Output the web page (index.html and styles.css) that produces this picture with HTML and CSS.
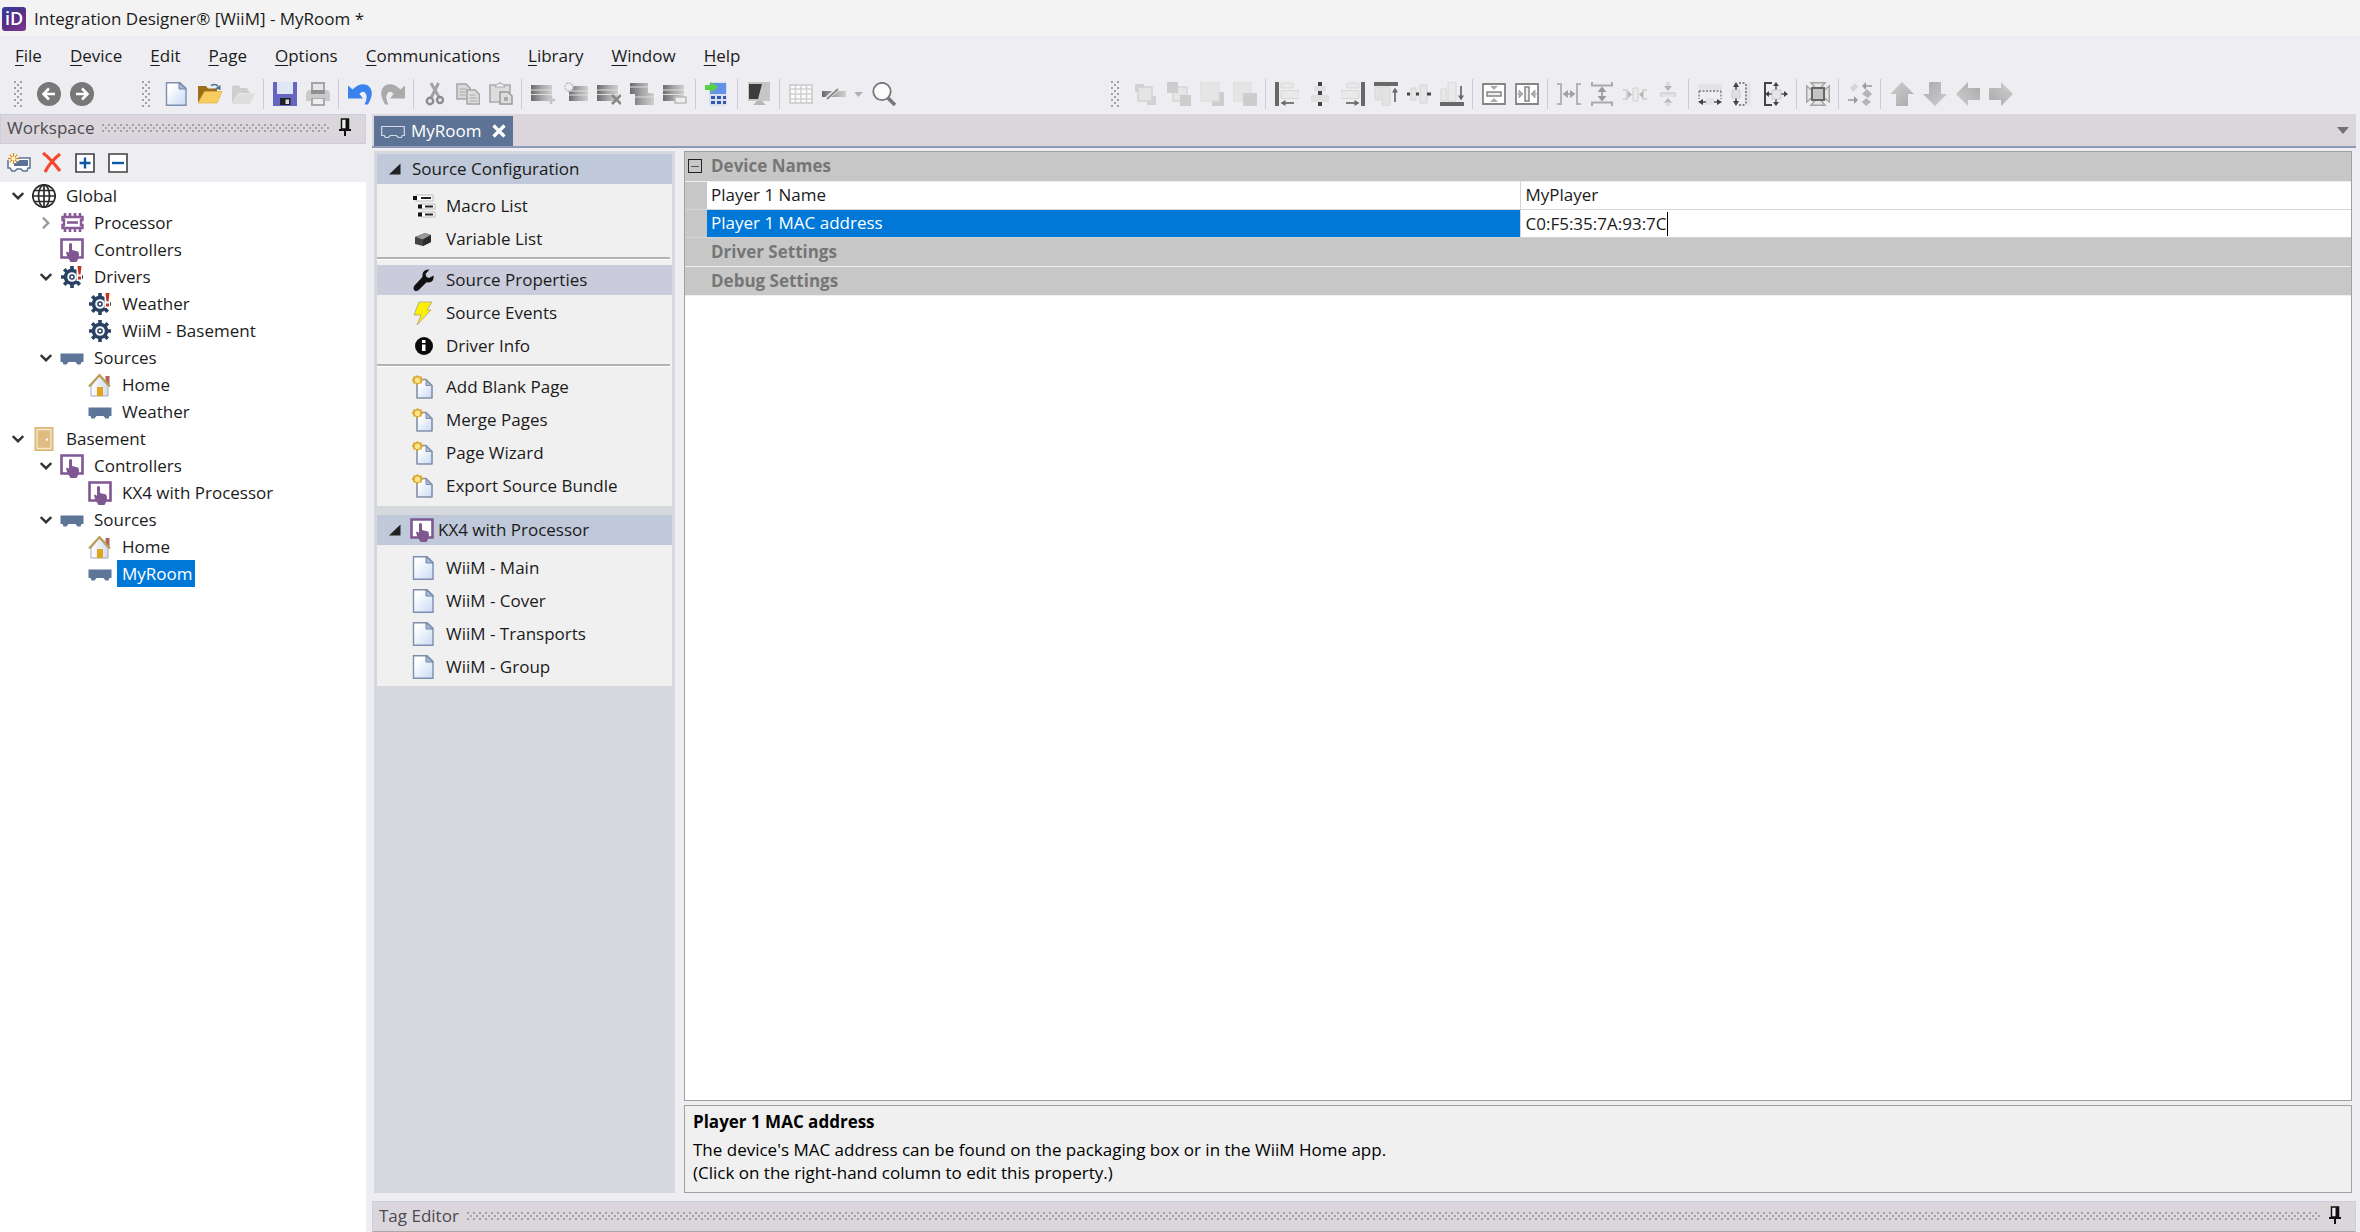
FILE: index.html
```html
<!DOCTYPE html>
<html lang="en">
<head>
<meta charset="utf-8">
<title>Integration Designer® [WiiM] - MyRoom *</title>
<link rel="stylesheet" href="styles.css">
</head>
<body>
<svg class="sprite" aria-hidden="true">
  <defs>
    <linearGradient id="g-page" x1="0" y1="0" x2="1" y2="1"><stop offset="0.2" stop-color="#fff"/><stop offset="1" stop-color="#c9d9f5"/></linearGradient>
    <linearGradient id="g-gray" x1="0" y1="0" x2="1" y2="1"><stop offset="0" stop-color="#cfcfcf"/><stop offset="1" stop-color="#a9a9a9"/></linearGradient>
    <linearGradient id="g-bar" x1="0" y1="0" x2="1" y2="0"><stop offset="0" stop-color="#6a6a6a"/><stop offset=".5" stop-color="#a6a6a6"/><stop offset="1" stop-color="#cfcfcf"/></linearGradient>
    <linearGradient id="g-wall" x1="0" y1="0" x2="1" y2="0"><stop offset="0" stop-color="#fff"/><stop offset="1" stop-color="#d5dceb"/></linearGradient>
  </defs>
  <symbol id="back" viewBox="0 0 24 24"><circle cx="12" cy="12" r="12" fill="#787878"/><path d="M18 12H7M12 6.500L6.500 12l5.500 5.500" fill="none" stroke="#fff" stroke-width="2.600"/></symbol>
  <symbol id="forward" viewBox="0 0 24 24"><circle cx="12" cy="12" r="12" fill="#787878"/><path d="M6 12h11M12 6.500l5.500 5.500-5.500 5.500" fill="none" stroke="#fff" stroke-width="2.600"/></symbol>
  <symbol id="page" viewBox="0 0 24 24"><path d="M1.500.7H15l6 5.500v17.100h-19.500z" fill="url(#g-page)" stroke="#7d8fae" stroke-width="1.400"/><path d="M14 1v6h7z" fill="#a9bad8" stroke="#6f84a8" stroke-width="1"/></symbol>
  <symbol id="newpage" viewBox="0 0 24 24"><path d="M5 4.500h9l6 6v12.500H5z" fill="url(#g-page)" stroke="#8290a8" stroke-width="1.600" stroke-linejoin="round"/><path d="M14 5v5.500h5.500z" fill="#a9b8d4" stroke="#8290a8"/><path d="M5.500 0l1.700 1.500L9.500 1.200l.4 2.300L11.500 5l-1.600 1.600-.4 2.200-2.300-.2-1.700 1.900-1.700-1.900-2.300.2-.4-2.200L-.5 5l1.600-1.500.4-2.300 2.300.3z" fill="#dca62c"/><circle cx="5.500" cy="5.200" r="2.800" fill="#fbe58c"/></symbol>
  <symbol id="open" viewBox="0 0 24 24"><path d="M0 21V4h8l2 2.500h9V10H7z" fill="#9c6e1b"/><path d="M6.500 9.500H24L19 21H0z" fill="#f9cc5f" stroke="#e2ae40" stroke-width=".7"/><path d="M13 3.500q4.500-2.500 7 .8" fill="none" stroke="#4b7191" stroke-width="1.500"/><path d="M22.500 3v5L17 6.500z" fill="#4b7191"/></symbol>
  <symbol id="closefolder" viewBox="0 0 24 24"><path d="M1 21V5q0-1.500 1.500-1.500h5L9.500 6H16l3 5H7z" fill="#cecece"/><path d="M7 11.500h17L19 22H1z" fill="#dedede"/></symbol>
  <symbol id="save" viewBox="0 0 24 24"><path d="M0 0h24v24H0z" fill="#6565c4"/><path d="M4 0h16v12H4z" fill="#dfe6f6"/><path d="M7 16h10.500v7H7z" fill="#222"/><path d="M12.500 17.500h3.500V22h-3.500z" fill="#ddd"/></symbol>
  <symbol id="print" viewBox="0 0 24 24"><path d="M5 0h14v8H5z" fill="#a5a5a5"/><path d="M7 2h10v6H7z" fill="#e6e6e6"/><path d="M2 8h20l2 3v8H0v-8z" fill="#cacaca"/><path d="M5 8h14v4H5z" fill="#909090"/><path d="M5 16h14v8H5z" fill="#a9a9a9"/><path d="M7 17h10v5H7z" fill="#eee"/></symbol>
  <symbol id="undo" viewBox="0 0 24 24"><path d="M0 3.500l4.500 4Q12 0 19 3q9 5.500 1 19.500h-3.500Q20.500 15 17 10.500q-3-2-5.500 1.500l3.500 4.500H0z" fill="#3a83ee"/></symbol>
  <symbol id="redo" viewBox="0 0 24 24"><path d="M24 3.500l-4.500 4Q12 0 5 3q-9 5.500-1 19.500h3.500Q3.500 15 7 10.500q3-2 5.500 1.500L9 16.500h15z" fill="#aaa"/></symbol>
  <symbol id="cut" viewBox="0 0 24 24"><path d="M8 1l8.500 15M15.500 1L8 16" stroke="#a2a2a2" stroke-width="3"/><circle cx="7" cy="19" r="3.200" fill="none" stroke="#8d8d8d" stroke-width="2.400"/><circle cx="17" cy="18" r="3" fill="none" stroke="#8d8d8d" stroke-width="2.400"/></symbol>
  <symbol id="copy" viewBox="0 0 24 24"><path d="M1 2h9l4 4v11H1z" fill="#dadada" stroke="#a5a5a5" stroke-width="1.500"/><path d="M3.500 7h7M3.500 10h7M3.500 13h6" stroke="#aaa" stroke-width="1.200"/><path d="M11 8h8l4.500 4.500V22H11z" fill="#ddd" stroke="#a5a5a5" stroke-width="1.500"/><path d="M13.500 13h6M13.500 16h8M13.500 19h8" stroke="#aaa" stroke-width="1.200"/></symbol>
  <symbol id="paste" viewBox="0 0 24 24"><path d="M1 3h20v17H1z" fill="#ddd" stroke="#aaa" stroke-width="1.600"/><path d="M6 5l2-3h2l1-2 1 2h2l2 3z" fill="#f5f5f5" stroke="#aaa"/><path d="M11 10h8l4 4v8H11z" fill="#ddd" stroke="#999" stroke-width="1.500"/><path d="M15 15h4v4h-4z" fill="#aaa"/></symbol>
  <symbol id="mac" viewBox="0 0 24 24"><path d="M0 3h21v16H0z" fill="url(#g-bar)"/><path d="M0 8h21M0 12.500h21" stroke="#dedede" stroke-width="1"/></symbol>
  <symbol id="macadd" viewBox="0 0 24 24"><use href="#mac"/><path d="M20 14v8M16 18h8" stroke="#c4c4c4" stroke-width="2.400"/></symbol>
  <symbol id="macnew" viewBox="0 0 24 24"><path d="M5 4h19v15H5z" fill="url(#g-bar)"/><path d="M5 9h19M5 13h19" stroke="#dedede" stroke-width="1"/><circle cx="5" cy="5" r="4" fill="#eee" stroke="#c4c4c4" stroke-width="1.800" stroke-dasharray="2 1"/></symbol>
  <symbol id="macdel" viewBox="0 0 24 24"><use href="#mac"/><path d="M15 13l9 9M24 13l-9 9" stroke="#888" stroke-width="2.600"/></symbol>
  <symbol id="macdup" viewBox="0 0 24 24"><path d="M0 1h18v11H0zM5 11h19v12H5z" fill="url(#g-bar)"/><path d="M0 5h18M5 15h19" stroke="#dedede" stroke-width="1"/></symbol>
  <symbol id="macedit" viewBox="0 0 24 24"><use href="#mac"/><path d="M12 15h11v6H12z" fill="#eee" stroke="#bbb" stroke-width="1.600"/></symbol>
  <symbol id="calc" viewBox="0 0 24 24"><path d="M4 0h18v24H4z" fill="#d8e0ee"/><path d="M5 1h16v11H5z" fill="#6592e8"/><path d="M6 14h4v3H6zM12 14h4v3h-4zM18 14h3v3h-3zM6 19h4v3H6zM12 19h4v3h-4zM18 19h3v3h-3z" fill="#3556b0"/><path d="M0 3h6V0l7 5-7 6V8H0z" fill="#58d147"/></symbol>
  <symbol id="screen" viewBox="0 0 24 24"><path d="M1 0h22v19H1z" fill="#c6c6c6"/><path d="M2 2h13l-4 15H2z" fill="#3c3c3c"/><path d="M10 19h5l4 4H6z" fill="#b5b5b5"/></symbol>
  <symbol id="grid" viewBox="0 0 24 24"><path d="M1 3h22v18H1z" fill="#fdfdfd" stroke="#d2d2d2" stroke-width="2"/><path d="M1 7h22M1 12h22M1 17h22M6.500 3v18M12 3v18M17.500 3v18" stroke="#d0d0d0" stroke-width="1.500"/></symbol>
  <symbol id="line" viewBox="0 0 24 24"><path d="M0 9h24v6H0z" fill="url(#g-bar)"/><path d="M5 16L16 7" stroke="#eee" stroke-width="4"/><path d="M5 17L16 7" stroke="#888" stroke-width="1.800"/></symbol>
  <symbol id="find" viewBox="0 0 24 24"><path d="M15 15l8 8" stroke="#777" stroke-width="3.600"/><circle cx="10" cy="9.500" r="8.700" fill="#fbfbfb" stroke="#777" stroke-width="1.800"/></symbol>
  <symbol id="z1" viewBox="0 0 24 24"><path d="M1 2h9v8H1zM13 14h9v9h-9z" fill="#d2d2d2"/><path d="M4 5h14v14H4z" fill="#e4e4e4" stroke="#d2d2d2" stroke-width="1.500"/></symbol>
  <symbol id="z2" viewBox="0 0 24 24"><path d="M6 5h14v14H6z" fill="#e6e6e6" stroke="#d6d6d6" stroke-width="1.300"/><path d="M0 0h11v11H0zM13 13h11v11H13z" fill="#cdcdcd"/></symbol>
  <symbol id="z3" viewBox="0 0 24 24"><path d="M12 10h12v14H12z" fill="#cdcdcd"/><path d="M0 0h19v19H0z" fill="#e5e5e5" stroke="#dcdcdc"/></symbol>
  <symbol id="z4" viewBox="0 0 24 24"><path d="M0 0h18v19H0z" fill="#e5e5e5" stroke="#dcdcdc"/><path d="M10 11h14v13H10z" fill="#cdcdcd"/></symbol>
  <symbol id="aleft" viewBox="0 0 24 24"><path d="M6 1h12v5H6zM6 8.500h18v8H6z" fill="#e9e9e9" stroke="#d9d9d9"/><path d="M0 0h4v24H0z" fill="#686868"/><path d="M9 21h10" stroke="#686868" stroke-width="1.700"/><path d="M5.500 21l5-3v6z" fill="#686868"/></symbol>
  <symbol id="acenter" viewBox="0 0 24 24"><path d="M6 4h12v5H6zM3 13h18v7H3z" fill="#e0e0e0"/><path d="M10 0h4v4h-4zM10 9h4v4h-4zM10 20h4v4h-4z" fill="#444"/></symbol>
  <symbol id="aright" viewBox="0 0 24 24"><path d="M6 1h12v5H6zM0 8.500h18v8H0z" fill="#e9e9e9" stroke="#d9d9d9"/><path d="M20 0h4v24h-4z" fill="#686868"/><path d="M5 21h10" stroke="#686868" stroke-width="1.700"/><path d="M18.500 21l-5-3v6z" fill="#686868"/></symbol>
  <symbol id="atop" viewBox="0 0 24 24"><path d="M1 5h5v13H1zM8 5h8v19H8z" fill="#e3e3e3" stroke="#d6d6d6"/><path d="M0 0h24v4H0z" fill="#686868"/><path d="M21 9v11" stroke="#686868" stroke-width="1.700"/><path d="M21 5.500l3 5h-6z" fill="#686868"/></symbol>
  <symbol id="amiddle" viewBox="0 0 24 24"><path d="M4 6h5v12H4zM13 3h7v18h-7z" fill="#e6e6e6" stroke="#d4d4d4"/><path d="M0 10.500h3v3H0zM9 10.500h3v3H9zM20 10.500h4v3h-4z" fill="#444"/></symbol>
  <symbol id="abottom" viewBox="0 0 24 24"><path d="M1 7h5v12H1zM8 0h8v19H8z" fill="#e9e9e9" stroke="#d6d6d6"/><path d="M0 20h24v4H0z" fill="#686868"/><path d="M21 4v11" stroke="#686868" stroke-width="1.700"/><path d="M21 18.500l3-5h-6z" fill="#686868"/></symbol>
  <symbol id="cv" viewBox="0 0 24 24"><path d="M1 2h22v20H1z" fill="#fff" stroke="#858585" stroke-width="1.800"/><path d="M5 10h14v4H5z" fill="#eee" stroke="#858585" stroke-width="1.500"/><path d="M8 4h8l-4 4zM8 20h8l-4-4z" fill="#aaa"/></symbol>
  <symbol id="ch" viewBox="0 0 24 24"><path d="M1 2h22v20H1z" fill="#fff" stroke="#858585" stroke-width="1.800"/><path d="M10 5h4v14h-4z" fill="#eee" stroke="#858585" stroke-width="1.500"/><path d="M4 8v8l4-4zM20 8v8l-4-4zM1 12h4M19 12h4" fill="#aaa" stroke="#aaa"/></symbol>
  <symbol id="sw" viewBox="0 0 24 24"><path d="M0 2h4v20H0M24 2h-4v20h4M7 12h10" fill="none" stroke="#b4b4b4" stroke-width="2"/><path d="M5.500 12l5.500-4v8zM18.500 12L13 8v8z" fill="#a2a2a2"/></symbol>
  <symbol id="sh" viewBox="0 0 24 24"><path d="M2 0v3.500h20V0M2 24v-3.500h20V24M12 7v10" fill="none" stroke="#aaa" stroke-width="2"/><path d="M12 4.500l4.500 5.500h-9zM12 19.500l4.500-5.500h-9z" fill="#999"/></symbol>
  <symbol id="jw" viewBox="0 0 24 24"><path d="M0 8h4v9H0M24 8h-4v9h4" fill="none" stroke="#cbcbcb" stroke-width="1.500"/><path d="M10 6h5v13h-5z" fill="#ececec" stroke="#cfcfcf"/><path d="M5 9v7l4-3.500zM20 9v7l-4-3.500z" fill="#b4b4b4"/></symbol>
  <symbol id="jh" viewBox="0 0 24 24"><path d="M5 15v-4h14v4" fill="#e4e4e4" stroke="#cfcfcf" stroke-width="1.500"/><path d="M8 4h8l-4 5zM8 21h8l-4-5z" fill="#b4b4b4"/><path d="M10 0h4v4h-4zM10 20h4v4h-4z" fill="#dcdcdc"/></symbol>
  <symbol id="mw" viewBox="0 0 24 24"><path d="M0 2h24v6H0z" fill="#e3e3e3"/><path d="M1 9v8M23 9v8M1 9h22" fill="none" stroke="#777" stroke-width="1.300" stroke-dasharray="2 1.500"/><path d="M2 20h20" stroke="#555" stroke-width="1.500"/><path d="M0 20l5-3v6zM24 20l-5-3v6z" fill="#444"/><path d="M8 16h8v7H8z" fill="#e3e3e3"/></symbol>
  <symbol id="mh" viewBox="0 0 24 24"><path d="M14 1h6v22h-6z" fill="#e6e6e6"/><path d="M8 1h7M8 23h7M15 2v20" stroke="#666" stroke-width="1.400" stroke-dasharray="2 1.500"/><path d="M5 2v20" stroke="#444" stroke-width="1.500"/><path d="M5 0l3 5H2zM5 24l3-5H2z" fill="#444"/><path d="M1 8h8v8H1z" fill="#e0e0e0" stroke="#ccc"/></symbol>
  <symbol id="mb" viewBox="0 0 24 24"><path d="M8 1H1v22h7" fill="none" stroke="#444" stroke-width="2"/><path d="M12 2v20M3 12h20" stroke="#555" stroke-width="1.500"/><path d="M12 0l3 4H9zM12 24l3-4H9zM24 12l-4-3v6zM1 12l4-3v6z" fill="#444"/><path d="M8 8h9v9H8z" fill="#e6e6e6" stroke="#ccc"/></symbol>
  <symbol id="fit" viewBox="0 0 24 24"><path d="M5 .7h14l-5 6h-4zM5 23.300h14l-5-6h-4zM.7 4v16l6-5V9zM23.300 4v16l-6-5V9z" fill="#e4e4e4" stroke="#a4a4a4" stroke-width="1.500"/><path d="M6 6h12v12H6z" fill="#c4c4c4" stroke="#666" stroke-width="2"/></symbol>
  <symbol id="swap" viewBox="0 0 24 24"><path d="M2 6l5-5 3 4-5 5z" fill="#d6d6d6"/><path d="M14 12l5-5 5 5-4 4zM14 20l4-4 5 4-5 4z" fill="#b4b4b4"/><path d="M24 4h-8M0 18h8" stroke="#999" stroke-width="1.500"/><path d="M14 4l4-4v8zM10 18l-4-4v8z" fill="#999"/></symbol>
  <symbol id="arr" viewBox="0 0 24 24"><path d="M12 0l12 12h-6v12H6V12H0z" fill="url(#g-gray)"/></symbol>
  <symbol id="pin" viewBox="0 0 14 20"><path d="M3.500 1h7v10h-7z" fill="#eee" stroke="#111" stroke-width="1.500"/><path d="M7.500 1h3v10h-3z" fill="#111"/><path d="M1 12h12M7 12v6" stroke="#111" stroke-width="2"/></symbol>
  <symbol id="tri" viewBox="0 0 12 7"><path d="M0 0h12L6 7z"/></symbol>
  <symbol id="addsrc" viewBox="0 0 24 24"><path d="M1 9v8h2l2 3h3l2-2h4l2 2h4l1-3h2V7H11" fill="#fff" stroke="#5d7395" stroke-width="1.500"/><path d="M13 9h8v6H7v-3z" fill="#5d7395"/><circle cx="6.500" cy="7.500" r="5" fill="#fff"/><path d="M6.500 2v11M1 7.500h11M2.600 3.600l7.800 7.800M10.400 3.600l-7.800 7.800" stroke="#d08a22" stroke-width="1.300"/><circle cx="6.500" cy="7.500" r="2" fill="#fff3c0"/></symbol>
  <symbol id="del" viewBox="0 0 24 24"><path d="M3 2q7 5 17 18M20 3Q10 11 5 21" fill="none" stroke="#f5482f" stroke-width="3.200"/></symbol>
  <symbol id="plus" viewBox="0 0 24 24"><path d="M3 3h18v18H3z" fill="#fff" stroke="#404040" stroke-width="1.600"/><path d="M12 6.500v11M6.500 12h11" stroke="#0b59a4" stroke-width="2.400"/></symbol>
  <symbol id="minus" viewBox="0 0 24 24"><path d="M3 3h18v18H3z" fill="#fff" stroke="#404040" stroke-width="1.600"/><path d="M6 12h12" stroke="#0b59a4" stroke-width="2.400"/></symbol>
  <symbol id="globe" viewBox="0 0 24 24"><g fill="none" stroke="#2b2b2b" stroke-width="1.700"><circle cx="12" cy="12" r="11.200"/><ellipse cx="12" cy="12" rx="5.500" ry="11.200"/><path d="M12 1v22M1 12h22M3 6.500h18M3 17.500h18"/></g></symbol>
  <symbol id="cpu" viewBox="0 0 24 24"><path d="M5 2v4M10 2v4M15 2v4M20 2v4M5 17v4M10 17v4M15 17v4M20 17v4" stroke="#875a96" stroke-width="2.600"/><path d="M2.500 6h20v3H21v5h1.500v3h-20v-3H4V9H2.500z" fill="#fff" stroke="#875a96" stroke-width="2.400"/><path d="M7 11.500h11" stroke="#875a96" stroke-width="2.600"/></symbol>
  <symbol id="touch" viewBox="0 0 24 24"><path d="M1.500 1.500h21v18h-21z" fill="#fff" stroke="#7f5791" stroke-width="2.600"/><path d="M9 6q1.500-2 3 0v6l6 1.500q1 1 1 3.500-.5 4-2.500 7h-6L7 18l-1-4q1.500-1 3 1z" fill="#7f5791"/></symbol>
  <symbol id="gear" viewBox="0 0 24 24"><path d="M12 1v22M1 12h22M4.200 4.200l15.600 15.600M19.800 4.200L4.200 19.800" stroke="#2a4163" stroke-width="3.600"/><circle cx="12" cy="12" r="8.300" fill="#2a4163"/><circle cx="12" cy="12" r="4.800" fill="#f3f6fa"/><circle cx="12" cy="12" r="2.800" fill="#2a4163"/><circle cx="12" cy="12" r="1.300" fill="#fff"/></symbol>
  <symbol id="gearwarn" viewBox="0 0 24 24"><use href="#gear"/><path d="M16.500 0H22v16h-5.500z" fill="#fff"/><path d="M17.500 1h4l-1 8.500h-2zM18 11.500h3v3h-3z" fill="#c5341c"/></symbol>
  <symbol id="source" viewBox="0 0 24 24"><path d="M.5 7.500h23v8.500h-2l-1 2.500h-3l-2-2.500h-7l-2 2.500h-3l-1-2.500h-2z" fill="#5d7597"/></symbol>
  <symbol id="sourceline" viewBox="0 0 24 24"><path d="M.7 7.500h22.600v9h-2l-1 2h-3l-2-2h-6l-2 2h-3l-1-2H.7z" fill="none" stroke="#d2dae6" stroke-width="1.200"/></symbol>
  <symbol id="home" viewBox="0 0 24 24"><path d="M17.500 3h4v9h-4z" fill="#b5615c"/><path d="M3 13l8-10 9 10v10H3z" fill="url(#g-wall)" stroke="#9da9bd"/><path d="M1 13.500L11.500 2 22 13.500" fill="none" stroke="#b99f4e" stroke-width="2"/><path d="M9 14h6v9H9z" fill="#e0a51c"/></symbol>
  <symbol id="door" viewBox="0 0 24 24"><path d="M2.500 0h19v24h-19z" fill="#dcb775"/><path d="M5 2.500h14v19H5z" fill="#dfbc80" stroke="#f7ead0" stroke-width="1.300"/><circle cx="15" cy="12.500" r="1.200" fill="#fff"/></symbol>
  <symbol id="chev" viewBox="0 0 12 12"><path d="M.7 3l5.300 5.200L11.300 3" fill="none" stroke-width="2.400"/></symbol>
  <symbol id="fold" viewBox="0 0 12 12"><path d="M11.500.5v11H0z" fill="#222"/></symbol>
  <symbol id="macros" viewBox="0 0 24 24"><path d="M4 1h17v6H4zM9 10h14v5H9zM9 18h14v5H9z" fill="#fff" stroke="#bbb"/><path d="M1 2h4v4H1zM6 10.500h4v4H6zM6 18.500h4v4H6z" fill="#111"/><path d="M9 4h10M13 12.500h8M13 20.500h8" stroke="#222" stroke-width="1.800"/></symbol>
  <symbol id="cube" viewBox="0 0 24 24"><path d="M3 10l10-4 6 2v7l-8 4-8-2z" fill="#444"/><path d="M4 10l9-4L18.500 8 11 12.500z" fill="#999"/><path d="M11 12.500L19 8v7l-8 4z" fill="#2c2c2c"/></symbol>
  <symbol id="wrench" viewBox="0 0 24 24"><path d="M17.500 1.500q-6.500 0-7 5 .2 2-.5 3l-7.500 8q-2 3 0 5 2 1.500 4.500-.7l7.500-7.500q6 .7 7-3.800.2-1.300 0-3l-4.500 2.500-2.500-1-1-3z" fill="#111"/></symbol>
  <symbol id="bolt" viewBox="0 0 24 24"><path d="M7 1h13l-5 8h4L5 24l4-10H2z" fill="#fcf000" stroke="#b5b08a"/></symbol>
  <symbol id="info" viewBox="0 0 24 24"><circle cx="12" cy="12" r="9" fill="#0a0a0a"/><path d="M10 10.500h3.500V17h-3.500zM10 6h3.500v3h-3.500z" fill="#fff"/></symbol>
  <symbol id="x" viewBox="0 0 14 14"><path d="M1.500 1.500l11 11M12.500 1.500l-11 11" stroke="#fff" stroke-width="3.200"/></symbol>
</svg>

<div class="app">
  <header class="titlebar">
    <span class="logo">iD</span>
    <h1>Integration Designer® [WiiM] - MyRoom *</h1>
  </header>

  <nav class="menubar">
    <button><u>F</u>ile</button><button><u>D</u>evice</button><button><u>E</u>dit</button><button><u>P</u>age</button><button><u>O</u>ptions</button><button><u>C</u>ommunications</button><button><u>L</u>ibrary</button><button><u>W</u>indow</button><button><u>H</u>elp</button>
  </nav>

  <div class="toolbars">
    <div class="toolbar history" role="toolbar" aria-label="History">
      <span class="grip"></span>
      <button aria-label="Back"><svg><use href="#back"/></svg></button>
      <button aria-label="Forward"><svg><use href="#forward"/></svg></button>
    </div>
    <div class="toolbar standard" role="toolbar" aria-label="Standard">
      <span class="grip"></span>
      <button aria-label="New"><svg><use href="#page"/></svg></button>
      <button aria-label="Open"><svg><use href="#open"/></svg></button>
      <button aria-label="Close"><svg><use href="#closefolder"/></svg></button>
      <i class="sep"></i>
      <button aria-label="Save"><svg><use href="#save"/></svg></button>
      <button aria-label="Print"><svg><use href="#print"/></svg></button>
      <i class="sep"></i>
      <button aria-label="Undo"><svg><use href="#undo"/></svg></button>
      <button aria-label="Redo"><svg><use href="#redo"/></svg></button>
      <i class="sep"></i>
      <button aria-label="Cut"><svg><use href="#cut"/></svg></button>
      <button aria-label="Copy"><svg><use href="#copy"/></svg></button>
      <button aria-label="Paste"><svg><use href="#paste"/></svg></button>
      <i class="sep"></i>
      <button aria-label="Add step"><svg><use href="#macadd"/></svg></button>
      <button aria-label="New step"><svg><use href="#macnew"/></svg></button>
      <button aria-label="Delete step"><svg><use href="#macdel"/></svg></button>
      <button aria-label="Duplicate step"><svg><use href="#macdup"/></svg></button>
      <button aria-label="Edit step"><svg><use href="#macedit"/></svg></button>
      <i class="sep"></i>
      <button aria-label="Send to device"><svg><use href="#calc"/></svg></button>
      <i class="sep"></i>
      <button aria-label="Preview"><svg><use href="#screen"/></svg></button>
      <i class="sep"></i>
      <button aria-label="Grid"><svg><use href="#grid"/></svg></button>
      <button aria-label="Guides"><svg><use href="#line"/></svg></button>
      <button class="drop" aria-label="Guide options"><svg><use href="#tri"/></svg></button>
      <button aria-label="Find"><svg><use href="#find"/></svg></button>
    </div>
    <div class="toolbar layout" role="toolbar" aria-label="Layout">
      <span class="grip"></span>
      <button aria-label="Bring forward"><svg><use href="#z1"/></svg></button>
      <button aria-label="Send backward"><svg><use href="#z2"/></svg></button>
      <button aria-label="Bring to front"><svg><use href="#z3"/></svg></button>
      <button aria-label="Send to back"><svg><use href="#z4"/></svg></button>
      <i class="sep"></i>
      <button aria-label="Align left"><svg><use href="#aleft"/></svg></button>
      <button aria-label="Align center"><svg><use href="#acenter"/></svg></button>
      <button aria-label="Align right"><svg><use href="#aright"/></svg></button>
      <button aria-label="Align top"><svg><use href="#atop"/></svg></button>
      <button aria-label="Align middle"><svg><use href="#amiddle"/></svg></button>
      <button aria-label="Align bottom"><svg><use href="#abottom"/></svg></button>
      <i class="sep"></i>
      <button aria-label="Center vertically"><svg><use href="#cv"/></svg></button>
      <button aria-label="Center horizontally"><svg><use href="#ch"/></svg></button>
      <i class="sep"></i>
      <button aria-label="Space across"><svg><use href="#sw"/></svg></button>
      <button aria-label="Space down"><svg><use href="#sh"/></svg></button>
      <button aria-label="Join across"><svg><use href="#jw"/></svg></button>
      <button aria-label="Join down"><svg><use href="#jh"/></svg></button>
      <i class="sep"></i>
      <button aria-label="Same width"><svg><use href="#mw"/></svg></button>
      <button aria-label="Same height"><svg><use href="#mh"/></svg></button>
      <button aria-label="Same size"><svg><use href="#mb"/></svg></button>
      <i class="sep"></i>
      <button aria-label="Fit"><svg><use href="#fit"/></svg></button>
      <i class="sep"></i>
      <button aria-label="Swap"><svg><use href="#swap"/></svg></button>
      <i class="sep"></i>
      <button aria-label="Move up"><svg><use href="#arr"/></svg></button>
      <button aria-label="Move down"><svg class="down"><use href="#arr"/></svg></button>
      <button aria-label="Move left"><svg class="left"><use href="#arr"/></svg></button>
      <button aria-label="Move right"><svg class="right"><use href="#arr"/></svg></button>
    </div>
  </div>

  <div class="main">
    <aside class="workspace">
      <div class="panel-head"><h2>Workspace</h2><span class="dots"></span><button aria-label="Pin workspace"><svg><use href="#pin"/></svg></button></div>
      <div class="tree-tools">
        <button aria-label="Add"><svg><use href="#addsrc"/></svg></button>
        <button aria-label="Remove"><svg><use href="#del"/></svg></button>
        <button aria-label="Expand all"><svg><use href="#plus"/></svg></button>
        <button aria-label="Collapse all"><svg><use href="#minus"/></svg></button>
      </div>
      <ul class="tree">
        <li><div class="node"><svg class="chev"><use href="#chev"/></svg><svg><use href="#globe"/></svg><span>Global</span></div>
          <ul>
            <li><div class="node"><svg class="chev closed"><use href="#chev"/></svg><svg><use href="#cpu"/></svg><span>Processor</span></div></li>
            <li><div class="node leaf"><svg><use href="#touch"/></svg><span>Controllers</span></div></li>
            <li><div class="node"><svg class="chev"><use href="#chev"/></svg><svg><use href="#gearwarn"/></svg><span>Drivers</span></div>
              <ul>
                <li><div class="node leaf"><svg><use href="#gearwarn"/></svg><span>Weather</span></div></li>
                <li><div class="node leaf"><svg><use href="#gear"/></svg><span>WiiM - Basement</span></div></li>
              </ul></li>
            <li><div class="node"><svg class="chev"><use href="#chev"/></svg><svg><use href="#source"/></svg><span>Sources</span></div>
              <ul>
                <li><div class="node leaf"><svg><use href="#home"/></svg><span>Home</span></div></li>
                <li><div class="node leaf"><svg><use href="#source"/></svg><span>Weather</span></div></li>
              </ul></li>
          </ul></li>
        <li><div class="node"><svg class="chev"><use href="#chev"/></svg><svg><use href="#door"/></svg><span>Basement</span></div>
          <ul>
            <li><div class="node"><svg class="chev"><use href="#chev"/></svg><svg><use href="#touch"/></svg><span>Controllers</span></div>
              <ul><li><div class="node leaf"><svg><use href="#touch"/></svg><span>KX4 with Processor</span></div></li></ul></li>
            <li><div class="node"><svg class="chev"><use href="#chev"/></svg><svg><use href="#source"/></svg><span>Sources</span></div>
              <ul>
                <li><div class="node leaf"><svg><use href="#home"/></svg><span>Home</span></div></li>
                <li><div class="node leaf"><svg><use href="#source"/></svg><span class="selected">MyRoom</span></div></li>
              </ul></li>
          </ul></li>
      </ul>
    </aside>

    <main class="document">
      <div class="tabs">
        <div class="tab"><svg><use href="#sourceline"/></svg><span>MyRoom</span><button aria-label="Close MyRoom"><svg><use href="#x"/></svg></button></div>
        <button class="tab-list" aria-label="Open documents"><svg><use href="#tri"/></svg></button>
      </div>

      <div class="editor">
        <nav class="side">
          <section>
            <h3><svg class="fold"><use href="#fold"/></svg>Source Configuration</h3>
            <div class="group">
              <button><svg><use href="#macros"/></svg>Macro List</button>
              <button><svg><use href="#cube"/></svg>Variable List</button>
              <hr>
              <button class="current"><svg><use href="#wrench"/></svg>Source Properties</button>
              <button><svg><use href="#bolt"/></svg>Source Events</button>
              <button><svg><use href="#info"/></svg>Driver Info</button>
              <hr>
              <button><svg><use href="#newpage"/></svg>Add Blank Page</button>
              <button><svg><use href="#newpage"/></svg>Merge Pages</button>
              <button><svg><use href="#newpage"/></svg>Page Wizard</button>
              <button><svg><use href="#newpage"/></svg>Export Source Bundle</button>
            </div>
          </section>
          <section>
            <h3 class="device"><svg class="fold"><use href="#fold"/></svg><svg><use href="#touch"/></svg>KX4 with Processor</h3>
            <div class="group">
              <button><svg><use href="#page"/></svg>WiiM - Main</button>
              <button><svg><use href="#page"/></svg>WiiM - Cover</button>
              <button><svg><use href="#page"/></svg>WiiM - Transports</button>
              <button><svg><use href="#page"/></svg>WiiM - Group</button>
            </div>
          </section>
        </nav>

        <div class="properties">
          <div class="sheet">
            <table>
              <colgroup><col class="c-gutter"><col class="c-name"><col></colgroup>
              <tbody>
                <tr class="cat"><td><button class="collapse" aria-label="Collapse Device Names"></button></td><th colspan="2">Device Names</th></tr>
                <tr><td class="gutter"></td><th scope="row"><label for="p-name">Player 1 Name</label></th><td class="value"><input id="p-name" value="MyPlayer"></td></tr>
                <tr class="active"><td class="gutter"></td><th scope="row"><label for="p-mac">Player 1 MAC address</label></th><td class="value"><span class="editing"><input id="p-mac" value="C0:F5:35:7A:93:7C"></span></td></tr>
                <tr class="cat"><td></td><th colspan="2">Driver Settings</th></tr>
                <tr class="cat"><td></td><th colspan="2">Debug Settings</th></tr>
              </tbody>
            </table>
          </div>
          <div class="help">
            <h3>Player 1 MAC address</h3>
            <p>The device's MAC address can be found on the packaging box or in the WiiM Home app.<br>(Click on the right-hand column to edit this property.)</p>
          </div>
        </div>
      </div>

      <div class="panel-head tag-editor"><h2>Tag Editor</h2><span class="dots"></span><button aria-label="Pin tag editor"><svg><use href="#pin"/></svg></button></div>
    </main>
  </div>
</div>
</body>
</html>
```
FILE: styles.css
```css
* { box-sizing: border-box; margin: 0; padding: 0; }

body {
  font-family: "Open Sans", "Noto Sans", sans-serif;
  font-size: 17px;
  line-height: 24px;
  color: #1b1b1b;
  background: #eeeef2;
}

button, input {
  font: inherit;
  color: inherit;
  background: none;
  border: 0;
}

h1, h2, h3, th { font-size: inherit; font-weight: 400; text-align: left; }
svg { display: block; flex: none; width: 24px; height: 24px; }
ul { list-style: none; }
.sprite { position: absolute; width: 0; height: 0; }

.app { display: flex; flex-direction: column; min-height: 100vh; }

/* Title and menus */
.titlebar {
  display: flex;
  align-items: center;
  gap: 8px;
  height: 36px;
  padding: 2px 2px 0;
  background: #f3f3f3;
}
.logo {
  width: 24px;
  height: 24px;
  border-radius: 3px;
  background: linear-gradient(150deg, #2f3f9c, #5a2d85 50%, #7c3791);
  color: #fff;
  font-size: 18px;
  font-weight: 600;
  line-height: 23px;
  text-align: center;
}
.menubar {
  display: flex;
  gap: 28px;
  height: 40px;
  padding: 0 15px;
  align-items: center;
}
.menubar u { text-underline-offset: 3px; }

/* Toolbars */
.toolbars { display: flex; height: 38px; padding: 0 14px 2px; }
.toolbar { display: flex; align-items: center; }
.toolbar button {
  display: flex;
  align-items: center;
  justify-content: center;
  width: 33px;
  height: 33px;
}
.toolbar .drop { width: 17px; }
.drop svg { width: 9px; height: 5px; fill: #b0b0b0; }
.history { width: 128px; }
.standard { width: 969px; }
.grip, .dots {
  background:
    radial-gradient(circle at 1px 1px, #a3a0a6 1px, transparent 1px) 0 0 / 6px 6px,
    radial-gradient(circle at 1px 1px, #a3a0a6 1px, transparent 1px) 3px 3px / 6px 6px;
}
.grip { width: 8px; height: 26px; margin-right: 10px; }
.sep { width: 9px; height: 30px; background: linear-gradient(#c9cbdb, #c9cbdb) 4px 0 / 1px 100% no-repeat; }
.down { transform: rotate(180deg); }
.left { transform: rotate(-90deg); }
.right { transform: rotate(90deg); }

/* Docked panels */
.main { display: flex; flex: 1; }
.panel-head {
  display: flex;
  align-items: center;
  gap: 8px;
  height: 30px;
  padding: 0 13px 2px 6px;
  border: 1px solid #cccedb;
  background: #dad6db;
  color: #4a4a50;
}
.dots { flex: 1; height: 8px; }
.panel-head svg { width: 14px; height: 20px; }

.workspace { display: flex; flex-direction: column; width: 366px; }
.tree-tools { display: flex; gap: 9px; height: 38px; padding: 7px; }
.tree { flex: 1; background: #fff; padding-left: 12px; }
.tree ul { padding-left: 28px; }
.node { display: flex; align-items: center; height: 27px; }
.node.leaf { padding-left: 20px; }
.node .chev { width: 12px; height: 12px; margin-right: 8px; stroke: #333; }
.node .closed { stroke: #999; transform: rotate(-90deg); }
.node span { margin-left: 5px; padding: 0 2px 0 5px; line-height: 27px; }
.node .selected { background: #0078d7; color: #fff; }

/* Document area */
.document { display: flex; flex: 1; flex-direction: column; margin: 0 4px 0 6px; }
.tabs {
  display: flex;
  align-items: flex-end;
  justify-content: space-between;
  height: 34px;
  padding-left: 2px;
  border-bottom: 2px solid #8c9ab8;
  background: #dad6db;
}
.tab {
  display: flex;
  align-items: center;
  gap: 6px;
  height: 30px;
  padding: 0 7px;
  background: #5d7395;
  color: #fff;
}
.tab button { margin-left: 4px; }
.tab button svg { width: 14px; height: 14px; }
.tab-list { align-self: center; padding-right: 7px; }
.tab-list svg { width: 12px; height: 7px; fill: #717171; }

.editor { display: flex; flex: 1; gap: 9px; padding: 3px 4px 8px 2px; }
.side { width: 301px; padding: 3px; background: #d5d9dd; }
.side section { margin-bottom: 9px; background: #f0f0f0; }
.side h3 {
  display: flex;
  align-items: center;
  height: 30px;
  padding-left: 12px;
  background: #bfc9d9;
}
.side .fold { width: 12px; height: 12px; margin-right: 11px; }
.side .device .fold { margin-right: 9px; }
.side .device svg + svg { margin-right: 4px; }
.group { padding: 5px 0 4px; }
.group button {
  display: flex;
  align-items: center;
  gap: 10px;
  width: 100%;
  height: 33px;
  padding-left: 35px;
}
.group .current { height: 30px; margin: 4px 0 1px; background: #cbccdb; }
.group hr { height: 3px; margin: 2px 2px 3px 0; border: 0; border-top: 2px solid #b3b3b3; border-bottom: 1px solid #fff; }
.group .current { margin-top: 5px; }
.device + .group { padding: 6px 0 3px; }

.properties { display: flex; flex: 1; flex-direction: column; gap: 4px; }
.sheet { flex: 1; border: 1px solid #a0a0a0; background: #fff; }
.sheet table { width: 100%; border-collapse: collapse; table-layout: fixed; }
.c-gutter { width: 22px; }
.c-name { width: 813px; }
.sheet tr { height: 28px; border-bottom: 1px solid #d4d4d4; }
.sheet tr.cat { height: 29px; background: #c7c7c7; border-bottom-color: #efefef; }
.sheet th { padding-left: 4px; }
.cat th { font-weight: 700; color: #767676; }
.gutter { background: #c7c7c7; }
.sheet th[scope] { border-right: 1px solid #d4d4d4; }
.sheet .active th { background: #0078d7; color: #fff; }
.value { padding-left: 5px; }
.value input { display: block; width: 100%; outline: 0; }
.editing { display: inline-block; border-right: 1px solid #000; vertical-align: middle; }
.editing input { width: auto; field-sizing: content; }
.collapse {
  display: block;
  width: 14px;
  height: 14px;
  margin-left: 3px;
  border: 1px solid #222;
  background: linear-gradient(#555, #555) center / 8px 1px no-repeat;
}
.help { height: 88px; padding: 4px 8px; border: 1px solid #a0a0a0; background: #f0f0f0; color: #000; }
.help h3 { font-weight: 700; margin-bottom: 4px; }
.help p { line-height: 23px; }
.tag-editor { height: 31px; border-bottom-color: #a8a8a8; }
```
